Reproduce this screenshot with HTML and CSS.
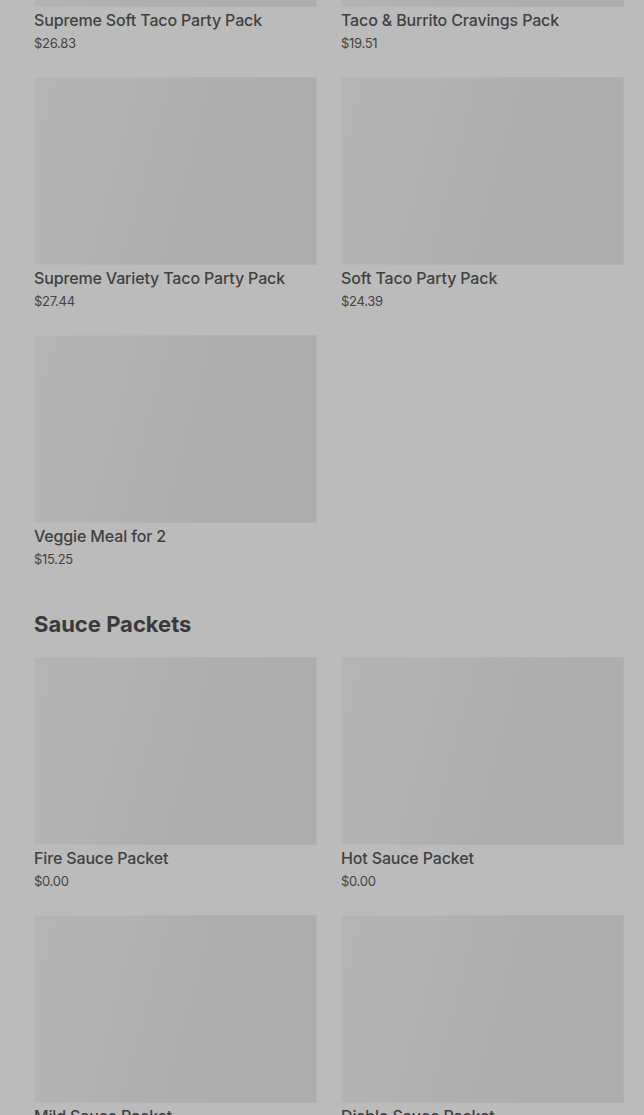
FILE: index.html
```html
<!DOCTYPE html>
<html>
<head>
    <link rel="stylesheet" href="styles.css">
</head>
<body>
    <div class="menu">
        <section class="category">
            <div class="grid">
                <a class="item" href="#">
                    <div class="thumb"></div>
                    <div class="name">Supreme Soft Taco Party Pack</div>
                    <div class="price">$26.83</div>
                </a>
                <a class="item" href="#">
                    <div class="thumb"></div>
                    <div class="name">Taco &amp; Burrito Cravings Pack</div>
                    <div class="price">$19.51</div>
                </a>
                <a class="item" href="#">
                    <div class="thumb"></div>
                    <div class="name">Supreme Variety Taco Party Pack</div>
                    <div class="price">$27.44</div>
                </a>
                <a class="item" href="#">
                    <div class="thumb"></div>
                    <div class="name">Soft Taco Party Pack</div>
                    <div class="price">$24.39</div>
                </a>
                <a class="item" href="#">
                    <div class="thumb"></div>
                    <div class="name">Veggie Meal for 2</div>
                    <div class="price">$15.25</div>
                </a>
            </div>
        </section>

        <section class="category">
            <h2>Sauce Packets</h2>
            <div class="grid">
                <a class="item" href="#">
                    <div class="thumb"></div>
                    <div class="name">Fire Sauce Packet</div>
                    <div class="price">$0.00</div>
                </a>
                <a class="item" href="#">
                    <div class="thumb"></div>
                    <div class="name">Hot Sauce Packet</div>
                    <div class="price">$0.00</div>
                </a>
                <a class="item" href="#">
                    <div class="thumb"></div>
                    <div class="name">Mild Sauce Packet</div>
                    <div class="price">$0.00</div>
                </a>
                <a class="item" href="#">
                    <div class="thumb"></div>
                    <div class="name">Diablo Sauce Packet</div>
                    <div class="price">$0.00</div>
                </a>
            </div>
        </section>
    </div>
</body>
</html>
```

FILE: styles.css
```css
* {
    margin: 0;
    padding: 0;
    box-sizing: border-box;
}

body {
    background: #bbbbbb;
    font-family: 'Inter', 'Roboto', sans-serif;
    color: #3d3d3d;
    overflow: hidden;
}

/* page is scrolled: first row of images sits above the fold */
.menu {
    margin-top: -181px;
    padding: 0 20px 0 34px;
}

.category h2 {
    font-size: 22px;
    line-height: 28px;
    font-weight: 700;
    color: #3a3a3a;
    margin: 40px 0 19px;
}

.grid {
    display: grid;
    grid-template-columns: 1fr 1fr;
    column-gap: 24px;
    row-gap: 23px;
}

.item {
    display: block;
    text-decoration: none;
    color: inherit;
}

.thumb {
    height: 188px;
    background: linear-gradient(105deg, #b4b4b4 0%, #b2b2b2 30%, #aeaeae 50%, #adadad 100%);
    box-shadow: inset 0 0 0 1px rgba(255, 255, 255, 0.06);
}

.name {
    font-size: 16px;
    line-height: 24px;
    padding-top: 1px;
    font-weight: 500;
    letter-spacing: -0.15px;
    color: #414141;
}

.price {
    font-size: 13px;
    line-height: 21px;
    padding-top: 1px;
    letter-spacing: -0.3px;
    color: #444444;
}
```
